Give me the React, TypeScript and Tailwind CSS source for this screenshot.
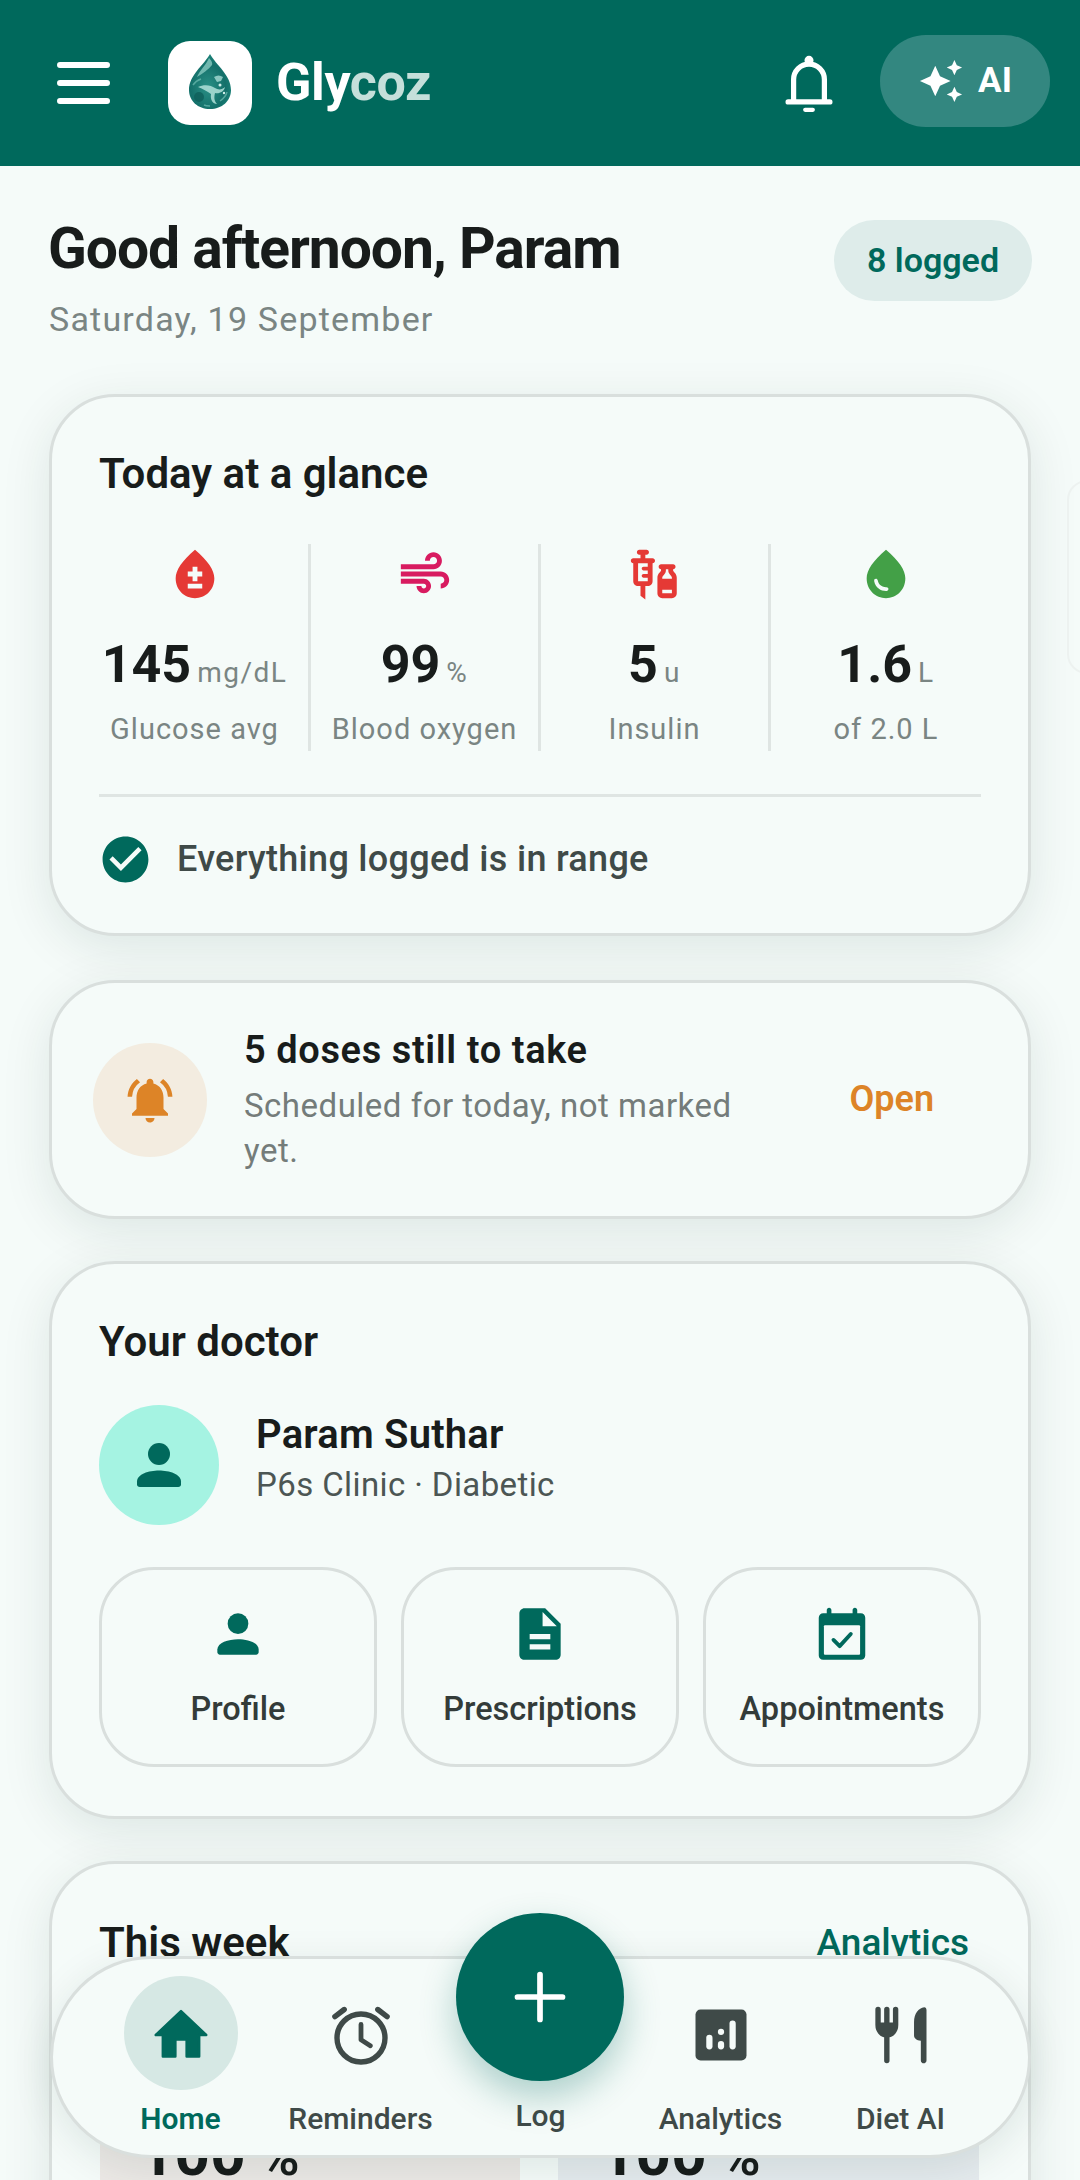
import React from "react";
import {
  MdBloodtype,
  MdAir,
  MdVaccines,
  MdWaterDrop,
  MdCheckCircle,
  MdNotificationsActive,
  MdDescription,
  MdAutoAwesome,
} from "react-icons/md";

function Person({ className }: { className?: string }) {
  return (
    <svg viewBox="0 0 24 24" className={className} fill="currentColor">
      <circle cx="12" cy="8" r="4" />
      <path d="M4 18c0-2.7 4.3-4 8-4s8 1.3 8 4v1c0 .6-.4 1-1 1H5c-.6 0-1-.4-1-1z" />
    </svg>
  );
}

function CalendarCheck({ className }: { className?: string }) {
  return (
    <svg viewBox="0 0 24 24" className={className}>
      <path
        fill="#00695c"
        d="M7 1.8c.5 0 .9.4.9.9V4h8.2V2.700c0-.5.4-.9.9-.9s.9.4.9.9V4h1.400c1 0 1.700.8 1.700 1.700v14.600c0 1-.8 1.700-1.700 1.700H4.700C3.700 22 3 21.200 3 20.300V5.700C3 4.800 3.800 4 4.700 4h1.400V2.700c0-.5.4-.9.9-.9z"
      />
      <rect x="5" y="8.600" width="14" height="11.400" rx="0.400" fill="#f5fbf9" />
      <path d="M8.700 14.300l2.400 2.400 4.300-4.700" fill="none" stroke="#00695c" strokeWidth="1.500" strokeLinecap="round" strokeLinejoin="round" />
    </svg>
  );
}

function Logo() {
  return (
    <svg viewBox="0 0 84 84" className="w-[84px] h-[84px]">
      <defs>
        <radialGradient id="dropFill" cx="45%" cy="60%" r="60%">
          <stop offset="0%" stopColor="#2a8f85" />
          <stop offset="70%" stopColor="#14706a" />
          <stop offset="100%" stopColor="#1c8379" />
        </radialGradient>
      </defs>
      <path d="M42 13C36 24 21 34 21 49c0 11 9 19 21 19s21-8 21-19C63 34 48 24 42 13z" fill="url(#dropFill)" />
      <path d="M41 17c-3 7-9 12-12 19 5-3 12-8 15-12 1-2-1-5-3-7z" fill="#8fcfc6" opacity="0.75" />
      <path d="M30 46c6-3 13-2 17 1 3 2 7 2 10-1-1 5-6 7-10 6-1 4-1 8 2 11-4 0-7-4-6-10-4-3-8-5-13-7z" fill="#a9dcd4" opacity="0.9" />
      <path d="M46 36c3-2 6-2 9 0l-2 4-4 1z" fill="#a8dcd4" opacity="0.8" />
      <circle cx="31" cy="56" r="5" fill="#0f5f5a" opacity="0.8" />
      <path d="M25 44c2-3 5-5 8-6M52 60c3-2 6-5 7-9M36 64c2 1 4 1 6 1" fill="none" stroke="#6fbdb2" strokeWidth="1.500" opacity="0.7" />
      <circle cx="52" cy="44" r="1.500" fill="#cfeee9" />
      <circle cx="56" cy="52" r="1.200" fill="#cfeee9" />
    </svg>
  );
}

function BellOutline() {
  return (
    <svg viewBox="0 0 24 24" className="w-[66px] h-[66px]" fill="none" stroke="#ffffff" strokeWidth="1.900" strokeLinecap="round" strokeLinejoin="round">
      <path d="M6.400 18.300V10.400a5.600 5.600 0 0 1 11.200 0v7.900" />
      <path d="M4.400 18.500h15.200" />
      <circle cx="12" cy="3.400" r="0.700" fill="#ffffff" />
      <path d="M10.600 21.400h2.800" strokeWidth="1.500" />
    </svg>
  );
}

function HomeIcon() {
  return (
    <svg viewBox="0 0 24 24" className="w-[68px] h-[68px]" fill="#00695c" stroke="#00695c" strokeWidth="0.900" strokeLinejoin="round">
      <path d="M12 3.600 3.100 12h2.500v7.600h4.400v-6h4v6h4.400V12h2.500z" />
    </svg>
  );
}

function AlarmIcon() {
  return (
    <svg viewBox="0 0 24 24" className="w-[72px] h-[72px]" fill="none" stroke="#3f4a48" strokeLinecap="round" strokeLinejoin="round">
      <circle cx="12" cy="13" r="8" strokeWidth="1.800" />
      <path d="M12 8.500V13.600l3.100 2" strokeWidth="1.600" />
      <path d="M3.300 5.900 6.400 3.500M20.700 5.900 17.600 3.500" strokeWidth="1.800" />
    </svg>
  );
}

function AnalyticsIcon() {
  return (
    <svg viewBox="0 0 24 24" className="w-[68px] h-[68px]">
      <rect x="3" y="3" width="18" height="18" rx="1.800" fill="#3f4a48" />
      <g fill="#f5fbf9">
        <rect x="6.800" y="11.900" width="2.200" height="5.200" rx="1.100" />
        <rect x="10.900" y="9.800" width="2.200" height="2.200" rx="1.100" />
        <rect x="10.900" y="14.100" width="2.200" height="3" rx="1.100" />
        <rect x="15" y="6.900" width="2.200" height="10.200" rx="1.100" />
      </g>
    </svg>
  );
}

function DietIcon() {
  return (
    <svg viewBox="0 0 24 24" className="w-[68px] h-[68px]" fill="#3f4a48" stroke="none">
      <path d="M3.900 3v5.500c0 2 1.400 3.500 3.100 3.500s3.100-1.500 3.100-3.500V3M7 3v18" fill="none" stroke="#3f4a48" strokeWidth="1.900" strokeLinecap="round" />
      <path d="M3.900 7.600h6.200c0 2.800-1.400 4.400-3.100 4.400s-3.100-1.600-3.100-4.400z" />
      <path d="M20.200 2.200c-2 .3-3.600 2.200-3.600 5.200v4.800c0 1 .9 1.800 2.400 1.800V21c0 .6.5 1 1 1s1-.4 1-1V3.200c0-.6-.3-1-.8-1z" />
    </svg>
  );
}

function PlusIcon() {
  return (
    <svg viewBox="0 0 24 24" className="w-[72px] h-[72px]" fill="none" stroke="#ffffff" strokeWidth="1.900" strokeLinecap="round">
      <path d="M12 4.500v15M4.500 12h15" />
    </svg>
  );
}

function MenuIcon() {
  return (
    <svg viewBox="0 0 53 42" className="w-[53px] h-[42px]" stroke="#ffffff" strokeWidth="6" strokeLinecap="round">
      <path d="M3 3h47M3 21h47M3 39h47" />
    </svg>
  );
}

const cardClass =
  "bg-[#f5fbf9] border-[3px] border-[#d9dfdd] rounded-[66px] shadow-[0_12px_50px_rgba(0,50,40,0.1)]";

const stats = [
  { icon: <MdBloodtype className="w-[58px] h-[58px] text-[#e53935]" />, value: "145", unit: "mg/dL", label: "Glucose avg" },
  { icon: <MdAir className="w-[58px] h-[58px] text-[#d81b60]" />, value: "99", unit: "%", label: "Blood oxygen" },
  { icon: <MdVaccines className="w-[58px] h-[58px] text-[#e53935]" />, value: "5", unit: "u", label: "Insulin" },
  { icon: <MdWaterDrop className="w-[58px] h-[58px] text-[#43a047]" />, value: "1.6", unit: "L", label: "of 2.0 L" },
];

const actions = [
  { icon: <Person className="w-[62px] h-[62px] text-[#00695c]" />, label: "Profile" },
  { icon: <MdDescription className="w-[62px] h-[62px] text-[#00695c]" />, label: "Prescriptions" },
  { icon: <CalendarCheck className="w-[62px] h-[62px]" />, label: "Appointments" },
];

function NavItem({ icon, label, active }: { icon: React.ReactNode; label: string; active?: boolean }) {
  return (
    <div className="w-[180px] flex flex-col items-center">
      <div className={`w-[114px] h-[114px] rounded-full flex items-center justify-center pt-[4px] ${active ? "bg-[#d6e8e4]" : ""}`}>{icon}</div>
      <div className={`mt-[9px] text-[30px] leading-[40px] ${active ? "font-semibold text-[#00695c]" : "font-medium text-[#3f4a48]"}`}>{label}</div>
    </div>
  );
}

export default function App() {
  return (
    <div className="relative w-[1080px] h-[2180px] overflow-hidden bg-[#f5fbf9] font-[Roboto,sans-serif] text-[#181c1b]">
      <header className="h-[166px] bg-[#00695c] flex items-center pl-[57px] pr-[30px]">
        <MenuIcon />
        <div className="ml-[58px] w-[84px] h-[84px] bg-white rounded-[22px] overflow-hidden">
          <Logo />
        </div>
        <div className="ml-[24px] text-[52px] leading-[60px] font-bold tracking-[-0.4px] text-white">
          Gly<span className="text-[#c5dfda]">coz</span>
        </div>
        <div className="ml-auto mr-[38px] mt-[2px]">
          <BellOutline />
        </div>
        <div className="w-[170px] h-[92px] rounded-full bg-[#338780] flex items-center justify-center gap-[14px] -mt-[4px]">
          <MdAutoAwesome className="w-[46px] h-[46px] text-white" />
          <span className="text-[35px] leading-[40px] font-bold text-white">AI</span>
        </div>
      </header>

      <main className="px-[49px]">
        <div className="flex justify-between items-start pt-[55px] h-[228px]">
          <div>
            <h1 className="text-[57px] leading-[56px] font-bold tracking-[-1.05px] -ml-[1px]">Good afternoon, Param</h1>
            <p className="mt-[20px] text-[34px] leading-[44px] tracking-[1.2px] text-[#7a8583]">Saturday, 19 September</p>
          </div>
          <div className="flex items-center h-[81px] w-[198px] justify-center rounded-full bg-[#deecea] text-[34px] font-semibold text-[#00695c] mr-[-1px] -mt-[1px]">
            8 logged
          </div>
        </div>

        <section className={`${cardClass} h-[542px] pt-[52px] px-[47px]`}>
          <h2 className="text-[42px] leading-[50px] font-semibold">Today at a glance</h2>
          <div className="mt-[45px] w-[920px] -ml-[18px] h-[207px] grid grid-cols-4">
            {stats.map((s, i) => (
              <div key={s.label} className={`flex flex-col items-center pt-[1px] ${i < 3 ? "border-r-[3px] border-[#dfe5e3]" : ""}`}>
                {s.icon}
                <div className="mt-[32px] h-[60px] flex items-baseline justify-center gap-[6px]">
                  <span className="text-[52px] leading-[60px] font-bold">{s.value}</span>
                  <span className="text-[28px] leading-[40px] tracking-[1.5px] text-[#7a8583]">{s.unit}</span>
                </div>
                <div className="mt-[14px] text-[29px] leading-[40px] tracking-[1px] text-[#7a8583] whitespace-nowrap">{s.label}</div>
              </div>
            ))}
          </div>
          <div className="mt-[43px] h-[3px] bg-[#dfe5e3]" />
          <div className="mt-[35px] flex items-center gap-[24px] -ml-[1px]">
            <MdCheckCircle className="w-[55px] h-[55px] text-[#00695c]" />
            <span className="text-[36px] leading-[55px] tracking-[0.3px] font-medium text-[#3f4a48]">Everything logged is in range</span>
          </div>
        </section>

        <section className={`${cardClass} mt-[44px] h-[239px] flex items-center pl-[41px] pr-[94px]`}>
          <div className="w-[114px] h-[114px] shrink-0 rounded-full bg-[#f3ece0] flex items-center justify-center">
            <MdNotificationsActive className="w-[54px] h-[54px] text-[#dd8427]" />
          </div>
          <div className="ml-[37px] w-[530px]">
            <div className="text-[38px] leading-[46px] font-semibold tracking-[0.6px]">5 doses still to take</div>
            <div className="mt-[10px] text-[33px] leading-[45px] tracking-[0.5px] text-[#747c7a]">Scheduled for today, not marked yet.</div>
          </div>
          <div className="ml-auto -mt-[2px] text-[36px] leading-[44px] font-semibold text-[#dd8427]">Open</div>
        </section>

        <section className={`${cardClass} mt-[42px] h-[558px] pt-[53px] px-[47px]`}>
          <h2 className="text-[42px] leading-[50px] font-semibold">Your doctor</h2>
          <div className="mt-[38px] flex items-center">
            <div className="w-[120px] h-[120px] rounded-full bg-[#a5f3e2] flex items-center justify-center">
              <Person className="w-[66px] h-[66px] text-[#00695c]" />
            </div>
            <div className="ml-[37px] pb-[13px]">
              <div className="text-[40px] leading-[46px] font-semibold tracking-[0.2px]">Param Suthar</div>
              <div className="mt-[6px] text-[33px] leading-[42px] tracking-[0.4px] text-[#4c5654]">P6s Clinic · Diabetic</div>
            </div>
          </div>
          <div className="mt-[42px] grid grid-cols-3 gap-[24px]">
            {actions.map((a) => (
              <div key={a.label} className="h-[200px] border-[3px] border-[#d9dfdd] rounded-[55px] flex flex-col items-center pt-[33px]">
                {a.icon}
                <div className="mt-[24px] text-[32.5px] leading-[40px] font-medium text-[#333b39]">{a.label}</div>
              </div>
            ))}
          </div>
        </section>

        <section className={`${cardClass} mt-[42px] h-[500px] pt-[54px] pl-[47px] pr-[59px]`}>
          <div className="flex items-center justify-between">
            <h2 className="text-[42px] leading-[50px] font-semibold">This week</h2>
            <span className="text-[37px] leading-[50px] font-medium text-[#00695c]">Analytics</span>
          </div>
          <div className="mt-[72px] ml-[1px] -mr-[12px] flex gap-[38px]">
            <div className="w-[420px] h-[300px] rounded-[40px] bg-[#ece9e6] pl-[39px] pt-[84px] flex items-baseline gap-[14px]">
              <span className="text-[62px] leading-[60px] font-bold">100</span>
              <span className="text-[54px] leading-[40px] font-semibold">%</span>
            </div>
            <div className="w-[421px] h-[300px] rounded-[40px] bg-[#e5ebee] pl-[42px] pt-[84px] flex items-baseline gap-[14px]">
              <span className="text-[62px] leading-[60px] font-bold">100</span>
              <span className="text-[54px] leading-[40px] font-semibold">%</span>
            </div>
          </div>
        </section>
      </main>

      <div className="absolute left-[1067px] top-[480px] w-[40px] h-[194px] border-[2px] border-[#edf2f0] rounded-[20px]" />

      <nav className="absolute left-[50px] top-[1956px] w-[981px] h-[202px] rounded-[101px] bg-[#f5fbf9] border-[3px] border-[#d9dfdd] shadow-[0_10px_40px_rgba(0,50,40,0.1)] flex justify-center pt-[17px]">
        <NavItem icon={<HomeIcon />} label="Home" active />
        <NavItem icon={<AlarmIcon />} label="Reminders" />
        <div className="w-[180px] flex flex-col items-center">
          <div className="mt-[120px] text-[30px] leading-[40px] font-medium text-[#3f4a48]">Log</div>
        </div>
        <NavItem icon={<AnalyticsIcon />} label="Analytics" />
        <NavItem icon={<DietIcon />} label="Diet AI" />
      </nav>
      <div className="absolute left-[456px] top-[1913px] w-[168px] h-[168px] rounded-full bg-[#00695c] shadow-[0_16px_36px_rgba(0,105,92,0.3)] flex items-center justify-center">
        <PlusIcon />
      </div>
    </div>
  );
}
